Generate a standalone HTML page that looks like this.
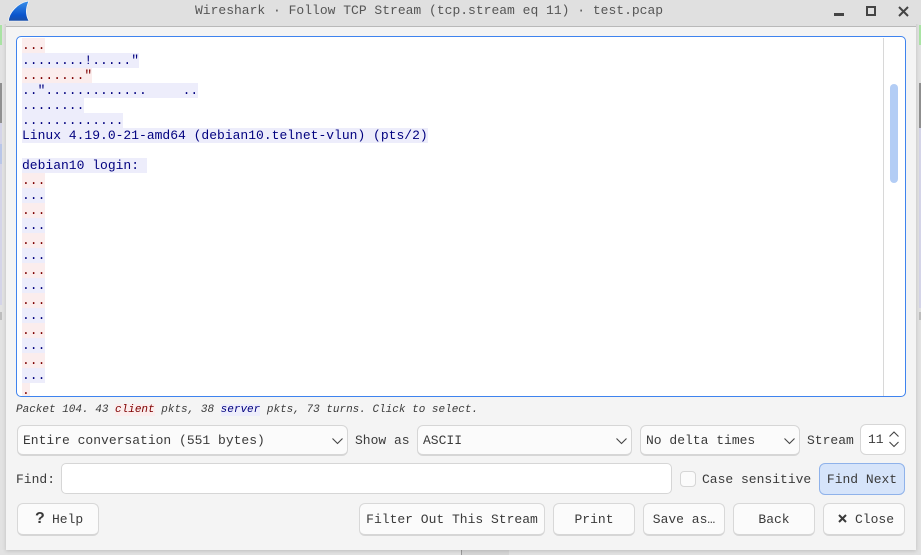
<!DOCTYPE html>
<html><head><meta charset="utf-8">
<style>
html,body{margin:0;padding:0;width:921px;height:555px;overflow:hidden;background:#e2e2e2}
*{box-sizing:border-box}
body{position:relative;font-family:"Liberation Mono","DejaVu Sans Mono",monospace;font-size:13px;color:#3a3a3a}
.a{position:absolute}
.t{position:absolute;white-space:pre;line-height:16px;height:16px}
.box{position:absolute;background:#fbfbfb;border:1px solid #d6d6d6;border-bottom:2px solid #d6d6d6;border-radius:6px}
.btn{position:absolute;top:503px;height:33px;background:#fbfbfb;border:1px solid #d8d8d8;border-bottom:2px solid #d6d6d6;border-radius:6px;text-align:center;line-height:31px;white-space:pre;color:#3a3a3a}
#txt{position:absolute;left:22px;top:38px;font-size:13px;line-height:15px;width:860px;height:358px;overflow:hidden}
#txt div{height:15px;white-space:pre}
#txt span{display:inline-block;height:15px;vertical-align:top;white-space:pre}
.c span{background:#fbeded;color:#7f0000}
.s span{background:#ededfb;color:#00007f}
svg{position:absolute;overflow:visible}
</style></head>
<body>
<!-- background window strips -->
<div class="a" style="left:0;top:25px;width:2px;height:20px;background:#a9e3a3"></div>
<div class="a" style="left:0;top:83px;width:2px;height:222px;background:#d4d4e8"></div>
<div class="a" style="left:0;top:83px;width:2px;height:40px;background:#8f8f8f"></div>
<div class="a" style="left:0;top:144px;width:2px;height:20px;background:#b9c6e8"></div>
<div class="a" style="left:0;top:312px;width:2px;height:8px;background:#bdbdbd"></div>
<div class="a" style="left:919px;top:25px;width:2px;height:20px;background:#a9e3a3"></div>
<div class="a" style="left:919px;top:83px;width:2px;height:225px;background:#d4d4e8"></div>
<div class="a" style="left:919px;top:83px;width:2px;height:45px;background:#8f8f8f"></div>
<div class="a" style="left:919px;top:312px;width:2px;height:8px;background:#bdbdbd"></div>
<div class="a" style="left:461px;top:550px;width:48px;height:5px;background:#d6d6d6;border-left:1px solid #9a9a9a"></div>

<!-- dialog -->
<div class="a" style="left:6px;top:0;width:910px;height:550px;background:#f4f4f4;box-shadow:0 1px 4px rgba(0,0,0,.16)"></div>
<div class="a" style="left:0;top:0;width:921px;height:24px;background:#e0e0e0"></div>
<div class="a" style="left:6px;top:24px;width:910px;height:2px;background:#e0e0e0"></div>
<div class="a" style="left:6px;top:26px;width:910px;height:1px;background:#b9b9b9"></div>

<!-- logo -->
<svg style="left:8px;top:0" width="22" height="23" viewBox="0 0 22 23">
<defs><linearGradient id="g" x1="0" y1="0" x2="0" y2="1"><stop offset="0" stop-color="#3a90ea"/><stop offset=".7" stop-color="#0b55cc"/><stop offset="1" stop-color="#1a4fa8"/></linearGradient></defs>
<path d="M0.5 21 C1 13 9 3 21 1 C17.5 8 17.5 15 21 21 Z" fill="url(#g)" stroke="#ffffff" stroke-width="0.6"/>
</svg>

<div class="t" style="left:195px;top:3px;color:#555;font-size:13px">Wireshark · Follow TCP Stream (tcp.stream eq 11) · test.pcap</div>

<!-- window buttons -->
<div class="a" style="left:834px;top:13px;width:10px;height:3px;background:#444"></div>
<div class="a" style="left:866px;top:6px;width:10px;height:10px;border:2px solid #444"></div>
<svg style="left:898px;top:6px" width="11" height="11" viewBox="0 0 11 11"><path d="M1 1 L10 10 M10 1 L1 10" stroke="#444" stroke-width="2" fill="none"/></svg>

<!-- text view -->
<div class="a" style="left:16px;top:36px;width:890px;height:361px;background:#fff;border:1px solid #3f83ee;border-radius:5px"></div>
<div class="a" style="left:883px;top:38px;width:1px;height:358px;background:#d8d8d8"></div>
<div class="a" style="left:890px;top:84px;width:8px;height:99px;background:#b3cdf5;border-radius:4px"></div>
<div id="txt"><div class="c"><span>...</span></div><div class="s"><span>........!....."</span></div><div class="c"><span>........"</span></div><div class="s"><span>.."............. <i style="display:inline-block;width:28px"></i>..</span></div><div class="s"><span>........</span></div><div class="s"><span>.............</span></div><div class="s"><span>Linux 4.19.0-21-amd64 (debian10.telnet-vlun) (pts/2)</span></div><div></div><div class="s"><span>debian10 login: </span></div><div class="c"><span>...</span></div><div class="s"><span>...</span></div><div class="c"><span>...</span></div><div class="s"><span>...</span></div><div class="c"><span>...</span></div><div class="s"><span>...</span></div><div class="c"><span>...</span></div><div class="s"><span>...</span></div><div class="c"><span>...</span></div><div class="s"><span>...</span></div><div class="c"><span>...</span></div><div class="s"><span>...</span></div><div class="c"><span>...</span></div><div class="s"><span>...</span></div><div class="c"><span>.</span></div></div>

<!-- status -->
<div class="t" style="left:16px;top:402px;font-size:11px;font-style:italic;color:#3a3a3a">Packet 104. 43 <span style="background:#fbeded;color:#7f0000">client</span> pkts, 38 <span style="background:#ededfb;color:#00007f">server</span> pkts, 73 turns. Click to select.</div>

<!-- row 1 -->
<div class="box" style="left:17px;top:425px;width:331px;height:31px"></div>
<div class="t" style="left:23px;top:433px">Entire conversation (551 bytes)</div>
<svg style="left:332px;top:438px" width="11" height="7"><path d="M0.5 0.5 L5.5 5.5 L10.5 0.5" stroke="#444" stroke-width="1.1" fill="none"/></svg>
<div class="t" style="left:355px;top:433px">Show as</div>
<div class="box" style="left:417px;top:425px;width:215px;height:31px"></div>
<div class="t" style="left:423px;top:433px">ASCII</div>
<svg style="left:616px;top:438px" width="11" height="7"><path d="M0.5 0.5 L5.5 5.5 L10.5 0.5" stroke="#444" stroke-width="1.1" fill="none"/></svg>
<div class="box" style="left:640px;top:425px;width:160px;height:31px"></div>
<div class="t" style="left:646px;top:433px">No delta times</div>
<svg style="left:784px;top:438px" width="11" height="7"><path d="M0.5 0.5 L5.5 5.5 L10.5 0.5" stroke="#444" stroke-width="1.1" fill="none"/></svg>
<div class="t" style="left:807px;top:433px">Stream</div>
<div class="a" style="left:860px;top:424px;width:46px;height:31px;background:#fff;border:1px solid #d6d6d6;border-radius:6px"></div>
<div class="t" style="left:868px;top:432px">11</div>
<svg style="left:889px;top:431px" width="11" height="17"><path d="M0.5 5.5 L5 1 L9.5 5.5 M0.5 11 L5 15.5 L9.5 11" stroke="#444" stroke-width="1.1" fill="none"/></svg>

<!-- row 2 -->
<div class="t" style="left:16px;top:472px">Find:</div>
<div class="a" style="left:61px;top:463px;width:611px;height:31px;background:#fff;border:1px solid #d6d6d6;border-radius:5px"></div>
<div class="a" style="left:680px;top:471px;width:16px;height:16px;background:#fbfbfb;border:1px solid #d6d6d6;border-radius:4px"></div>
<div class="t" style="left:702px;top:472px">Case sensitive</div>
<div class="a" style="left:819px;top:463px;width:86px;height:32px;background:#d6e4fa;border:1px solid #8fb2ea;border-radius:6px;text-align:center;line-height:31px;color:#3a3a3a">Find Next</div>

<!-- row 3 -->
<div class="btn" style="left:17px;width:82px"></div>
<div class="t" style="left:35px;top:511px;font-family:'Liberation Sans',sans-serif;font-size:16px;font-weight:700;color:#3a3a3a">?</div>
<div class="t" style="left:52px;top:512px">Help</div>
<div class="btn" style="left:359px;width:186px">Filter Out This Stream</div>
<div class="btn" style="left:553px;width:82px">Print</div>
<div class="btn" style="left:643px;width:82px">Save as…</div>
<div class="btn" style="left:733px;width:82px">Back</div>
<div class="btn" style="left:823px;width:82px"></div>
<svg style="left:838px;top:514px" width="9" height="9"><path d="M1 1 L8 8 M8 1 L1 8" stroke="#3a3a3a" stroke-width="2" fill="none"/></svg>
<div class="t" style="left:855px;top:512px">Close</div>
</body></html>
